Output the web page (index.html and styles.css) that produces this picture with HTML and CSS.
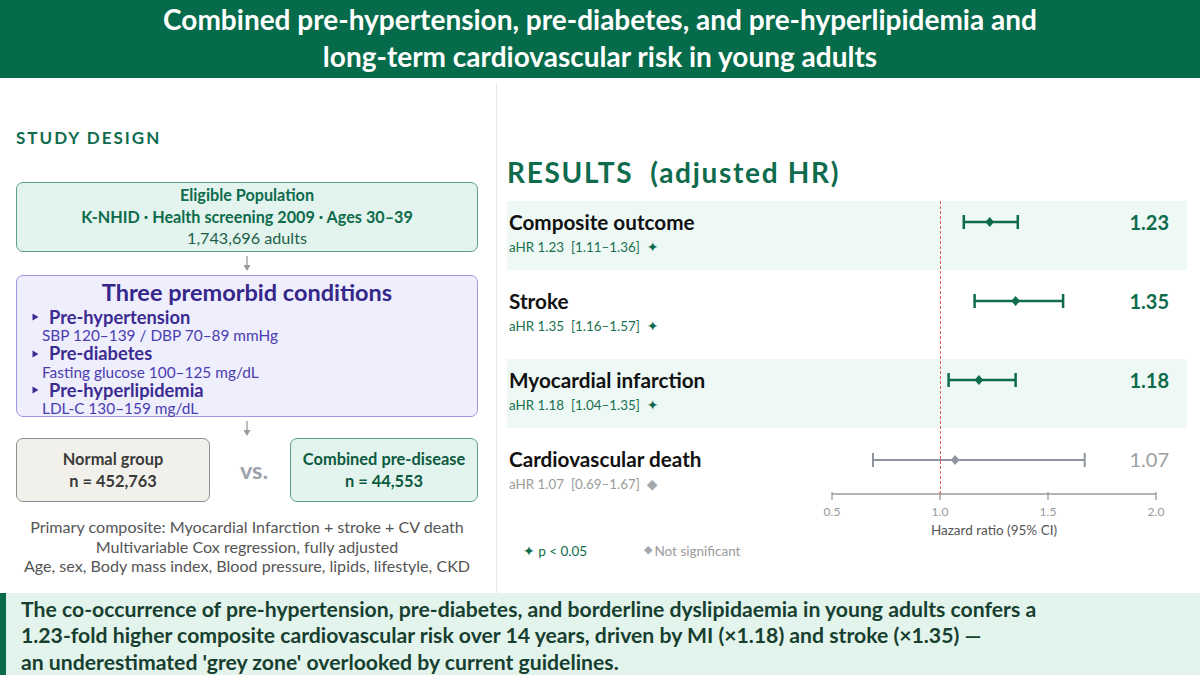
FILE: index.html
```html
<!DOCTYPE html>
<html lang="en">
<head>
<meta charset="utf-8">
<title>Combined pre-disease and cardiovascular risk</title>
<link rel="stylesheet" href="styles.css">
</head>
<body>
<div class="page">
  <header class="hdr">
    <h1 class="hdr-title">Combined pre-hypertension, pre-diabetes, and pre-hyperlipidemia and<br>long-term cardiovascular risk in young adults</h1>
  </header>
  <main class="main">
    <section class="left">
      <h2 class="sec-title">STUDY DESIGN</h2>
      <div class="box box-elig">
        <div class="b">Eligible Population</div>
        <div class="b">K-NHID · Health screening 2009 · Ages 30–39</div>
        <div class="r">1,743,696 adults</div>
      </div>
      <div class="arrow"><svg width="10" height="16" viewBox="0 0 10 16"><line x1="5" y1="0" x2="5" y2="10" stroke="#9a9a9a" stroke-width="1.3"/><path d="M1.5 9 L8.5 9 L5 15 Z" fill="#9a9a9a"/></svg></div>
      <div class="box box-cond">
        <div class="cond-title">Three premorbid conditions</div>
        <div class="cond-item">
          <div class="ct"><svg class="tri" width="9" height="10" viewBox="0 0 9 10"><path d="M1.5 1.5 L7.5 5 L1.5 8.5 Z" fill="#3b2c92"/></svg>Pre-hypertension</div>
          <div class="cs">SBP 120–139 / DBP 70–89 mmHg</div>
        </div>
        <div class="cond-item">
          <div class="ct"><svg class="tri" width="9" height="10" viewBox="0 0 9 10"><path d="M1.5 1.5 L7.5 5 L1.5 8.5 Z" fill="#3b2c92"/></svg>Pre-diabetes</div>
          <div class="cs">Fasting glucose 100–125 mg/dL</div>
        </div>
        <div class="cond-item">
          <div class="ct"><svg class="tri" width="9" height="10" viewBox="0 0 9 10"><path d="M1.5 1.5 L7.5 5 L1.5 8.5 Z" fill="#3b2c92"/></svg>Pre-hyperlipidemia</div>
          <div class="cs">LDL-C 130–159 mg/dL</div>
        </div>
      </div>
      <div class="arrow"><svg width="10" height="16" viewBox="0 0 10 16"><line x1="5" y1="0" x2="5" y2="10" stroke="#9a9a9a" stroke-width="1.3"/><path d="M1.5 9 L8.5 9 L5 15 Z" fill="#9a9a9a"/></svg></div>
      <div class="groups">
        <div class="grp grp-normal"><div>Normal group</div><div>n = 452,763</div></div>
        <div class="vs">vs.</div>
        <div class="grp grp-comb"><div>Combined pre-disease</div><div>n = 44,553</div></div>
      </div>
      <div class="notes">
        <div>Primary composite: Myocardial Infarction + stroke + CV death</div>
        <div>Multivariable Cox regression, fully adjusted</div>
        <div>Age, sex, Body mass index, Blood pressure, lipids, lifestyle, CKD</div>
      </div>
    </section>
    <div class="divider"></div>
    <section class="right">
      <h2 class="res-title">RESULTS&nbsp;&nbsp;(adjusted HR)</h2>
      <div class="forest">
        <div class="row shaded">
          <div class="lbl"><div class="name">Composite outcome</div><div class="sub sig">aHR 1.23&nbsp;&nbsp;[1.11–1.36]&nbsp;&nbsp;<span class="star">✦</span></div></div>
          <svg class="ci" width="268" height="69" viewBox="0 0 268 69"><g stroke="#0e6b4c" stroke-width="2.5"><line x1="131.8" y1="21" x2="185.8" y2="21"/><line x1="131.8" y1="14" x2="131.8" y2="28"/><line x1="185.8" y1="14" x2="185.8" y2="28"/></g><path d="M157.7 16 L162 21 L157.7 26 L153.4 21 Z" fill="#0e6b4c"/></svg>
          <div class="val sig">1.23</div>
        </div>
        <div class="row">
          <div class="lbl"><div class="name">Stroke</div><div class="sub sig">aHR 1.35&nbsp;&nbsp;[1.16–1.57]&nbsp;&nbsp;<span class="star">✦</span></div></div>
          <svg class="ci" width="268" height="69" viewBox="0 0 268 69"><g stroke="#0e6b4c" stroke-width="2.5"><line x1="142.6" y1="21" x2="231.1" y2="21"/><line x1="142.6" y1="14" x2="142.6" y2="28"/><line x1="231.1" y1="14" x2="231.1" y2="28"/></g><path d="M183.6 16 L187.9 21 L183.6 26 L179.3 21 Z" fill="#0e6b4c"/></svg>
          <div class="val sig">1.35</div>
        </div>
        <div class="row shaded">
          <div class="lbl"><div class="name">Myocardial infarction</div><div class="sub sig">aHR 1.18&nbsp;&nbsp;[1.04–1.35]&nbsp;&nbsp;<span class="star">✦</span></div></div>
          <svg class="ci" width="268" height="69" viewBox="0 0 268 69"><g stroke="#0e6b4c" stroke-width="2.5"><line x1="116.6" y1="21" x2="183.6" y2="21"/><line x1="116.6" y1="14" x2="116.6" y2="28"/><line x1="183.6" y1="14" x2="183.6" y2="28"/></g><path d="M146.9 16 L151.2 21 L146.9 26 L142.6 21 Z" fill="#0e6b4c"/></svg>
          <div class="val sig">1.18</div>
        </div>
        <div class="row last">
          <div class="lbl"><div class="name">Cardiovascular death</div><div class="sub ns">aHR 1.07&nbsp;&nbsp;[0.69–1.67]&nbsp;&nbsp;<span class="dia">◆</span></div></div>
          <svg class="ci" width="268" height="52" viewBox="0 0 268 52"><g stroke="#8e959e" stroke-width="2"><line x1="41" y1="22" x2="252.7" y2="22"/><line x1="41" y1="15" x2="41" y2="29"/><line x1="252.7" y1="15" x2="252.7" y2="29"/></g><path d="M123.1 17 L127.4 22 L123.1 27 L118.8 22 Z" fill="#8e959e"/></svg>
          <div class="val ns">1.07</div>
        </div>
        <div class="refline"></div>
      </div>
      <svg class="axis" width="348" height="50" viewBox="0 0 348 50">
        <g stroke="#9a9a9a" stroke-width="1.3">
          <line x1="10" y1="4" x2="334" y2="4"/>
          <line x1="10" y1="2" x2="10" y2="10"/>
          <line x1="118" y1="2" x2="118" y2="10"/>
          <line x1="226" y1="2" x2="226" y2="10"/>
          <line x1="334" y1="2" x2="334" y2="10"/>
        </g>
        <g class="tick-lbl" text-anchor="middle">
          <text x="10" y="26">0.5</text>
          <text x="118" y="26">1.0</text>
          <text x="226" y="26">1.5</text>
          <text x="334" y="26">2.0</text>
        </g>
        <text class="axis-title" x="172" y="45" text-anchor="middle">Hazard ratio (95% CI)</text>
      </svg>
      <div class="legend">
        <span class="lg lg-sig"><span class="star">✦</span> p &lt; 0.05</span>
        <span class="lg lg-ns"><span class="dia-sm">◆</span>Not significant</span>
      </div>
    </section>
  </main>
  <footer class="foot">
    <p>The co-occurrence of pre-hypertension, pre-diabetes, and borderline dyslipidaemia in young adults confers a<br>1.23-fold higher composite cardiovascular risk over 14 years, driven by MI (×1.18) and stroke (×1.35) —<br>an underestimated 'grey zone' overlooked by current guidelines.</p>
  </footer>
</div>
</body>
</html>
```

FILE: styles.css
```css
* { box-sizing: border-box; }
html, body { margin: 0; padding: 0; }
body {
  width: 1200px;
  height: 675px;
  overflow: hidden;
  background: #ffffff;
  font-family: "Lato", "Liberation Sans", "DejaVu Sans", sans-serif;
  color: #222;
}
.page { width: 1200px; height: 675px; display: flex; flex-direction: column; }

.hdr {
  height: 78px;
  background: #066b4a;
  display: flex;
  align-items: center;
  justify-content: center;
}
.hdr-title {
  margin: 0;
  color: #ffffff;
  font-size: 28px;
  font-weight: 700;
  line-height: 37px;
  text-align: center;
  padding-bottom: 2px;
}

.main { height: 515px; display: flex; }

.left { width: 496px; padding: 50px 18px 0 16px; }
.divider { width: 1px; background: #e6e6e6; margin-top: 5px; }
.right { flex: 1; padding: 77px 13px 0 10px; }

.sec-title {
  margin: 0;
  font-size: 17px;
  line-height: 20px;
  letter-spacing: 2px;
  color: #0e6b4c;
  font-weight: 700;
}

.box { border-radius: 7px; }
.box-elig {
  margin-top: 34px;
  height: 70px;
  background: #e3f4ee;
  border: 1px solid #5e9e86;
  text-align: center;
  padding-top: 1px;
  font-size: 16.2px;
  line-height: 21.5px;
  color: #0e6b4c;
}
.box-elig .b { font-weight: 700; }
.box-elig .r { color: #1d5f47; }

.arrow { height: 23px; display: flex; justify-content: center; align-items: center; }
.arrow svg { display: block; }

.box-cond {
  height: 142px;
  background: #efeefc;
  border: 1.5px solid #a098e0;
  padding: 3px 0 0 0;
}
.cond-title {
  text-align: center;
  font-size: 23.5px;
  font-weight: 700;
  line-height: 26px;
  margin-bottom: 3px;
  color: #35278a;
}
.cond-item { padding-left: 14px; }
.ct {
  font-size: 18.3px;
  font-weight: 700;
  line-height: 18.2px;
  color: #3b2c92;
  display: flex;
  align-items: center;
}
.tri { margin-right: 9px; }
.cs {
  font-size: 15.4px;
  line-height: 18.2px;
  color: #4a3db0;
  padding-left: 11px;
}

.groups { display: flex; height: 64px; margin-top: -2px; }
.grp {
  border-radius: 7px;
  display: flex;
  flex-direction: column;
  justify-content: center;
  align-items: center;
  font-size: 16.4px;
  font-weight: 700;
  line-height: 22px;
}
.grp-normal { width: 194px; background: #f2f0eb; border: 1px solid #8e8e8e; color: #3a3a3a; }
.grp-comb { width: 188px; background: #e3f4ee; border: 1px solid #5e9e86; color: #0c5a40; }
.vs {
  flex: 1;
  display: flex;
  align-items: center;
  justify-content: center;
  padding-left: 8px;
  font-size: 23.5px;
  font-weight: 700;
  color: #9ca2ab;
}

.notes {
  margin-top: 15px;
  text-align: center;
  font-size: 16.1px;
  line-height: 19.5px;
  color: #555;
}

.res-title {
  margin: 0;
  font-size: 28px;
  line-height: 34px;
  letter-spacing: 1.7px;
  color: #0e6b4c;
  font-weight: 700;
}

.forest { position: relative; margin-top: 12px; }
.row {
  display: grid;
  grid-template-columns: 325px 268px 1fr;
  height: 69px;
  margin-bottom: 10px;
}
.row.last { height: 52px; margin-bottom: 0; }
.row.shaded { background: #eef8f5; }
.lbl { padding: 9px 0 0 2px; }
.name { font-size: 20.7px; font-weight: 700; line-height: 24px; color: #111; }
.sub { font-size: 13.4px; line-height: 18px; margin-top: 4px; }
.sub.sig { color: #17704f; }
.sub.ns { color: #9a9a9a; }
.star { font-family: "DejaVu Sans", sans-serif; font-size: 14px; color: #0e6b4c; }
.dia { font-family: "DejaVu Sans", sans-serif; font-size: 14px; color: #a3a8ae; }
.ci { display: block; }
.val {
  text-align: right;
  padding: 9px 18px 0 0;
  font-size: 20px;
  line-height: 24px;
}
.val.sig { color: #0e6b4c; font-weight: 700; }
.val.ns { color: #9aa0a6; font-weight: 400; }

.refline {
  position: absolute;
  left: 433px;
  top: 0;
  bottom: -4px;
  width: 0;
  border-left: 1px dashed #d9605c;
}

.axis { display: block; margin-left: 315px; }
.tick-lbl text { font-size: 12px; fill: #999; font-family: "Lato", "Liberation Sans", sans-serif; }
.axis-title { font-size: 13.5px; fill: #555; font-family: "Lato", "Liberation Sans", sans-serif; }

.legend { display: flex; margin-top: 2px; padding-left: 16px; font-size: 13.5px; line-height: 18px; }
.lg-sig { width: 121px; color: #0e6b4c; }
.lg-ns { color: #9a9a9a; }
.dia-sm { font-family: "DejaVu Sans", sans-serif; font-size: 11px; color: #a3a8ae; position: relative; top: -3px; margin-right: 2px; }

.foot {
  height: 82px;
  background: #e3f4ec;
  border-left: 6px solid #0a6b4b;
  padding: 3px 0 0 15px;
  overflow: hidden;
}
.foot p {
  margin: 0;
  font-size: 21.2px;
  font-weight: 700;
  line-height: 26.3px;
  color: #173f30;
}
```
